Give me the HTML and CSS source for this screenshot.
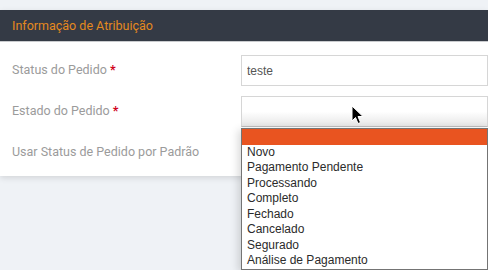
FILE: index.html
```html
<!DOCTYPE html>
<html lang="pt">
<head>
    <meta charset="UTF-8">
    <meta name="viewport" content="width=device-width, initial-scale=1.0">
    <title>Informação de Atribuição</title>
    <link rel="stylesheet" href="styles.css">
</head>
<body>
    <div class="painel">
        <div class="painel-titulo">Informação de Atribuição</div>
        <div class="painel-corpo">
            <div class="linha">
                <label for="status">Status do Pedido <span class="obrigatorio">*</span></label>
                <input type="text" id="status" value="teste">
            </div>
            <div class="linha">
                <label for="estado">Estado do Pedido <span class="obrigatorio">*</span></label>
                <div class="seletor" id="estado"></div>
            </div>
            <div class="linha">
                <label>Usar Status de Pedido por Padrão</label>
                <div class="vazio"></div>
            </div>
        </div>
    </div>

    <ul class="lista-opcoes">
        <li class="ativo">&nbsp;</li>
        <li>Novo</li>
        <li>Pagamento Pendente</li>
        <li>Processando</li>
        <li>Completo</li>
        <li>Fechado</li>
        <li>Cancelado</li>
        <li>Segurado</li>
        <li>Análise de Pagamento</li>
    </ul>

    <svg class="cursor" width="14" height="20" viewBox="0 0 14 20">
        <path d="M1 1 L1 16 L4.5 12.5 L7 18.5 L9.5 17.5 L7 11.5 L12 11.5 Z" fill="#000" stroke="#fff" stroke-width="1"/>
    </svg>
</body>
</html>
```
FILE: styles.css
```css
body {
    margin: 0;
    padding: 10px 0 0 0;
    background-color: #eff2f6;
    font-family: 'Roboto', sans-serif;
    height: 260px;
    overflow: hidden;
}

.painel {
    background-color: #fff;
    box-shadow: 0 2px 6px rgba(0, 0, 0, 0.12);
}

.painel-titulo {
    background-color: #343a45;
    color: #e5891e;
    font-size: 12.5px;
    height: 31px;
    line-height: 32px;
    padding-left: 12px;
    border-bottom: 1px solid #c9cbce;
}

.painel-corpo {
    padding: 13px 0 8px 0;
}

.linha {
    display: grid;
    grid-template-columns: 241px 247px;
    align-items: center;
    margin-bottom: 10px;
}

.linha:last-child {
    margin-bottom: 0;
}

.linha label {
    color: #9b9b9b;
    font-size: 12.5px;
    padding-left: 12px;
    margin-top: -3px;
}

.obrigatorio {
    color: #d0021b;
    font-weight: bold;
}

input[type="text"] {
    box-sizing: border-box;
    height: 31px;
    width: 247px;
    margin: 0;
    border: 1px solid #d6d6d6;
    padding: 0 5px;
    font-family: 'Liberation Sans', Arial, sans-serif;
    font-size: 12px;
    color: #555;
    outline: none;
}

.seletor {
    box-sizing: border-box;
    height: 31px;
    border: 1px solid #d6d6d6;
    border-bottom-color: #bdbdbd;
    background: linear-gradient(to bottom, #fff 0%, #fff 50%, #e6e6e6 100%);
}

.vazio {
    height: 31px;
}

.lista-opcoes {
    position: absolute;
    left: 241px;
    top: 128px;
    width: 245px;
    margin: 0;
    padding: 0;
    list-style: none;
    background-color: #fff;
    border: 1px solid #747474;
    border-right-width: 2px;
    box-shadow: -3px 2px 8px rgba(0, 0, 0, 0.15);
    font-family: 'Liberation Sans', Arial, sans-serif;
    font-size: 12px;
    color: #2b2b2b;
}

.lista-opcoes li {
    height: 15.5px;
    line-height: 15.5px;
    padding-left: 5px;
}

.lista-opcoes li.ativo {
    background-color: #e95420;
}

.cursor {
    position: absolute;
    left: 351px;
    top: 105px;
}
```
